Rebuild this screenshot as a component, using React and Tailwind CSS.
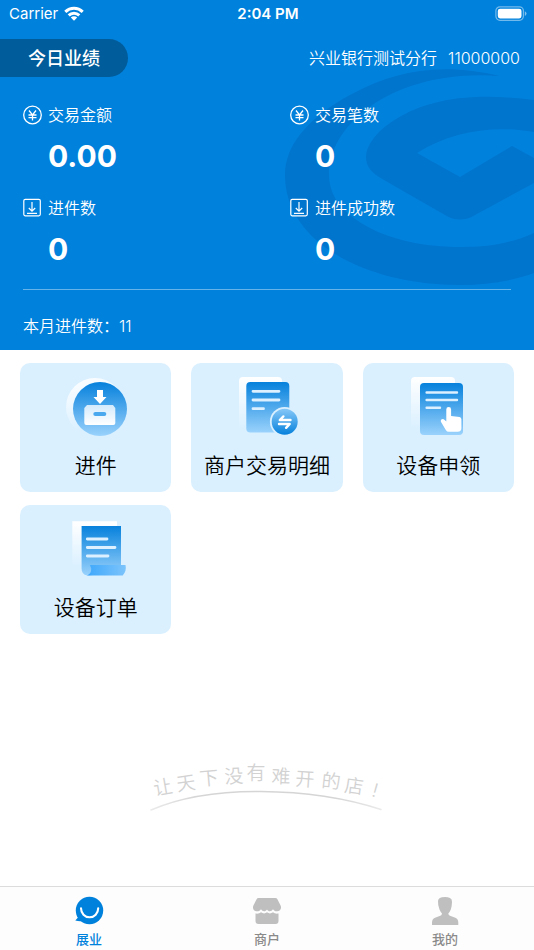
import React from 'react';

const stats = [
    { label: '交易金额', value: '0.00', Icon: YenIcon },
    { label: '交易笔数', value: '0', Icon: YenIcon },
    { label: '进件数', value: '0', Icon: InboxIcon },
    { label: '进件成功数', value: '0', Icon: InboxIcon },
];

const actions = [
    { label: '进件', Icon: IntakeArt },
    { label: '商户交易明细', Icon: DetailArt },
    { label: '设备申领', Icon: ApplyArt },
    { label: '设备订单', Icon: OrderArt },
];

const tabs = [
    { label: '展业', Icon: SmileIcon, active: true },
    { label: '商户', Icon: StoreIcon, active: false },
    { label: '我的', Icon: PersonIcon, active: false },
];

// each slogan character with its centre and tilt along the arc
const slogan = [
    ['让', 26, 38, -10],
    ['天', 49, 34, -8],
    ['下', 72, 29, -5],
    ['没', 97, 27, -3],
    ['有', 119, 24, 0],
    ['难', 144, 27, 2],
    ['开', 168, 30, 4],
    ['的', 194, 32, 6],
    ['店', 217, 37, 8],
    ['!', 238, 41, 16],
];

function YenIcon() {
    return (
        <svg className="w-5 h-5" viewBox="0 0 20 20" fill="none" stroke="white" strokeWidth="1.3" aria-hidden="true">
            <circle cx="9.5" cy="10" r="8.8" />
            <path d="M6 5.5 9.5 10 13 5.500M9.500 10v5.500M5.500 10h8M5.500 12.700h8" />
        </svg>
    );
}

function InboxIcon() {
    return (
        <svg className="w-5 h-5" viewBox="0 0 20 20" fill="none" stroke="white" strokeWidth="1.2" aria-hidden="true">
            <rect x="0.8" y="1.3" width="16.5" height="16.5" rx="1.5" />
            <path d="M9 4v9M5.800 10 9 13.200l3.200-3.200M4 15.300h10" />
        </svg>
    );
}

function IntakeArt() {
    return (
        <svg className="w-[72px] h-[66px]" viewBox="0 0 72 66" aria-hidden="true">
            <defs>
                <linearGradient id="in-back" x1="0" y1="0" x2="0.3" y2="1">
                    <stop offset="0" stopColor="#fff" />
                    <stop offset="0.9" stopColor="#fff" stopOpacity="0" />
                </linearGradient>
                <linearGradient id="in-disc" x1="0" y1="0" x2="0" y2="1">
                    <stop offset="0" stopColor="#0681dc" />
                    <stop offset="1" stopColor="#9ad2fc" />
                </linearGradient>
                <linearGradient id="in-box" x1="0" y1="0" x2="0" y2="1">
                    <stop offset="0" stopColor="#d3eafc" />
                    <stop offset="1" stopColor="#fff" />
                </linearGradient>
            </defs>
            <circle cx="35" cy="32" r="29" fill="url(#in-back)" />
            <circle cx="40" cy="34" r="27" fill="url(#in-disc)" />
            <path d="M37 15h6v7h3.5L40 29l-6.500-7H37z" fill="#fff" />
            <path d="M27 30h26l2.300 3v15a2 2 0 0 1-2 2h-27a2 2 0 0 1-2-2V33z" fill="url(#in-box)" />
            <rect x="33.3" y="37" width="13" height="4" rx="2" fill="#4aa8ee" />
        </svg>
    );
}

function DetailArt() {
    return (
        <svg className="w-[72px] h-[66px]" viewBox="0 0 72 66" aria-hidden="true">
            <defs>
                <linearGradient id="de-back" x1="0" y1="0" x2="0" y2="1">
                    <stop offset="0" stopColor="#fff" />
                    <stop offset="1" stopColor="#fff" stopOpacity="0" />
                </linearGradient>
                <linearGradient id="de-doc" x1="0" y1="0" x2="0" y2="1">
                    <stop offset="0" stopColor="#0681dc" />
                    <stop offset="1" stopColor="#9ad2fc" />
                </linearGradient>
                <linearGradient id="de-dot" x1="0" y1="0" x2="0" y2="1">
                    <stop offset="0" stopColor="#86c8f8" />
                    <stop offset="1" stopColor="#0681dc" />
                </linearGradient>
            </defs>
            <rect x="8" y="2" width="43" height="52" rx="4" fill="url(#de-back)" />
            <rect x="15.3" y="7" width="43" height="50.5" rx="4" fill="url(#de-doc)" />
            <path d="M22 16.300h26M22 25h26M22 33.700h10.500" stroke="#dcf0ff" strokeWidth="2.8" strokeLinecap="round" />
            <circle cx="53.7" cy="46.7" r="14.8" fill="#daf0ff" />
            <circle cx="53.7" cy="46.7" r="13" fill="url(#de-dot)" />
            <path d="M59.500 45H48.800l3.600-3.600M48 49h10.700l-3.600 3.800" fill="none" stroke="#fff" strokeWidth="2.4" strokeLinecap="round" strokeLinejoin="round" />
        </svg>
    );
}

function ApplyArt() {
    return (
        <svg className="w-[72px] h-[66px]" viewBox="0 0 72 66" aria-hidden="true">
            <defs>
                <linearGradient id="ap-back" x1="0" y1="0" x2="0" y2="1">
                    <stop offset="0" stopColor="#fff" />
                    <stop offset="1" stopColor="#fff" stopOpacity="0" />
                </linearGradient>
                <linearGradient id="ap-doc" x1="0" y1="0" x2="0" y2="1">
                    <stop offset="0" stopColor="#0681dc" />
                    <stop offset="1" stopColor="#9ad2fc" />
                </linearGradient>
            </defs>
            <rect x="9" y="2" width="44" height="52" rx="4" fill="url(#ap-back)" />
            <rect x="18" y="8" width="43" height="52" rx="4" fill="url(#ap-doc)" />
            <path d="M24.600 17.500h30.400M24.600 25h30.400M24.600 32.800h13.400" stroke="#dcf0ff" strokeWidth="2.4" strokeLinecap="round" />
            <path d="M44.300 34.500a2.400 2.400 0 0 1 4.800 0v6.500l8.400 1.100q1.900.3 1.900 2.200v8.700q0 3.800-3.600 3.800H46.800q-2 0-3-1.900l-4.900-8.100c-.8-2.400 2-3.800 3.700-1.900l1.700 1.700z" fill="#fff" />
        </svg>
    );
}

function OrderArt() {
    return (
        <svg className="w-[72px] h-[66px]" viewBox="0 0 72 66" aria-hidden="true">
            <defs>
                <linearGradient id="or-back" x1="0" y1="0" x2="0" y2="1">
                    <stop offset="0" stopColor="#fff" />
                    <stop offset="1" stopColor="#fff" stopOpacity="0" />
                </linearGradient>
                <linearGradient id="or-doc" x1="0" y1="0" x2="0" y2="1">
                    <stop offset="0" stopColor="#0681dc" />
                    <stop offset="1" stopColor="#9ad2fc" />
                </linearGradient>
                <linearGradient id="or-roll" x1="0" y1="0" x2="1" y2="0">
                    <stop offset="0" stopColor="#3fa8fb" />
                    <stop offset="1" stopColor="#7cc4fb" />
                </linearGradient>
            </defs>
            <path d="M12.300 4.300H57V50H12.300z" fill="url(#or-back)" />
            <path d="M21.600 9H61v44L30 58.500h-3q-5.400-1-5.400-7z" fill="url(#or-doc)" />
            <path d="M30 48h35.500q1.300 6-2.800 10.500H27q4.600-2 4.200-7z" fill="url(#or-roll)" />
            <path d="M27.300 22H47M27.300 30.500H55M27.300 39H48" stroke="#dcf0ff" strokeWidth="2.8" strokeLinecap="round" />
        </svg>
    );
}

function SmileIcon() {
    return (
        <svg className="w-[30px] h-[30px]" viewBox="0 0 30 30" aria-hidden="true">
            <circle cx="15.5" cy="14.5" r="13.7" fill="currentColor" />
            <path d="M2.500 18 4 21.500 1.300 24.500q4 1.300 8 .5z" fill="currentColor" />
            <path d="M7 12.300a8.600 9 0 0 0 17.200 0" fill="none" stroke="white" strokeWidth="2.1" strokeLinecap="round" />
        </svg>
    );
}

function StoreIcon() {
    return (
        <svg className="w-[30px] h-[30px]" viewBox="0 0 30 30" fill="#bfbfbf" aria-hidden="true">
            <path d="M6.500 2h17q1.300 0 1.900 1.200l3.200 6.300c1.300 2.900-.5 5.800-3.600 5.800-2 0-3.300-.9-4-2.100-.9 1.300-1.800 2-3.100 2S15.700 14.500 15 13.400c-.8 1.100-1.700 1.800-2.900 1.800-1.300 0-2.300-.7-3.100-2-.8 1.200-2 2.100-4 2.100-3.100 0-4.900-2.900-3.600-5.800l3.200-6.300Q5.200 2 6.500 2z" />
            <path d="M3.500 17.500c2.500.4 4.200-.2 5.500-1.200 1.900 1.500 4.200 1.500 6 0 1.800 1.500 4.100 1.500 6 0 1.300 1 3 1.600 5.500 1.200v7.500q0 3-3 3h-17q-3 0-3-3z" />
        </svg>
    );
}

function PersonIcon() {
    return (
        <svg className="w-[30px] h-[30px]" viewBox="0 0 30 30" fill="#bfbfbf" aria-hidden="true">
            <path d="M8 5Q8.500 1.800 12 1.300q4.500-1 8 .7 2.200 1.200 2 4-.1 4.500-1.200 7.500-1 2.500-2.500 4 .2 1.700 1.700 2.200l5.300 2q3 1.200 3 5v1.800q0 .5-.6.5H2.600q-.6 0-.6-.5v-1.800q0-3.800 3-5l5.300-2q1.500-.5 1.700-2.200-1.500-1.500-2.500-4Q7.800 9.500 8 5z" />
        </svg>
    );
}

const StatusBar = () => (
    <div className="h-7 pl-[9px] pr-[7px] grid grid-cols-3 items-center text-[15px] leading-7">
        <div className="flex items-center gap-[6px]">
            <span>Carrier</span>
            <svg className="w-5 h-4" viewBox="0 0 20 16" fill="none" stroke="white" strokeWidth="3" aria-hidden="true">
                <path d="M1.300 5.800a12.500 12.500 0 0 1 17.400 0M4.700 9.400a7.700 7.700 0 0 1 10.600 0" />
                <path d="m10 14.800-3.200-3.300a4.600 4.600 0 0 1 6.400 0z" fill="white" stroke="none" />
            </svg>
        </div>
        <span className="text-center font-semibold">2:04 PM</span>
        <svg className="w-8 h-4 justify-self-end" viewBox="0 0 32 16" aria-hidden="true">
            <rect x="0.9" y="0.8" width="27.5" height="13.5" rx="4" fill="none" stroke="white" strokeOpacity="0.45" strokeWidth="1.2" />
            <rect x="2.8" y="2.7" width="23.7" height="9.7" rx="2.3" fill="white" />
            <path d="M29.800 5.300q1.700.6 1.700 2.300t-1.700 2.300z" fill="white" fillOpacity="0.5" />
        </svg>
    </div>
);

const Emblem = () => (
    <svg className="absolute right-0 top-[68px] w-[249px] h-[218px]" viewBox="285 68 249 218" fill="#0075cd" aria-hidden="true">
        <path d="M500 76C442 62 395 70 350 95C308 118 285 145 285 175C285 243 367 285 460 285C487 285 512 281 534 273V233C512 243 490 247 462 247C417 247 380 237 355 219C338 207 329 192 329 175C329 120 400 68 500 76Z" />
        <path d="M534 100C470 92 425 99 390 123C374 134 366 147 366 157C366 166 371 173 384 180L445 215Q460 224 475 215L534 183V158L512 146L460 177L417 153C452 131 493 125 534 132Z" />
    </svg>
);

const App = () => {
    return (
        <div className="min-h-screen flex flex-col bg-white font-[Inter,'Noto_Sans_CJK_SC',sans-serif]" lang="zh-CN">
            {/* Header */}
            <header className="relative bg-[#0081dc] text-white">
                <Emblem />
                <div className="relative">
                    <StatusBar />

                    <div className="mt-[11px] flex items-center justify-between pr-[14px]">
                        <h1 className="h-[38px] px-7 rounded-r-full bg-[#005c9b] text-[18px] leading-10 font-medium">今日业绩</h1>
                        <p className="flex gap-[11px] text-[16px] leading-6 font-[350]">
                            <span>兴业银行测试分行</span>
                            <span>11000000</span>
                        </p>
                    </div>

                    <dl className="mt-[26px] grid grid-cols-2 gap-y-[18px]">
                        {stats.map(({ label, value, Icon }) => (
                            <div key={label} className="pl-[23px]">
                                <dt className="flex items-center gap-[5px] text-[16px] leading-6 font-[350]">
                                    <Icon />
                                    {label}
                                </dt>
                                <dd className="pl-[25px] mt-[7px] text-[30px] leading-[44px] font-bold">{value}</dd>
                            </div>
                        ))}
                    </dl>

                    <div className="mx-[23px] mt-[18px] pt-6 pb-3 border-t border-white/40">
                        <p className="text-[16px] leading-6 font-[350]">本月进件数：11</p>
                    </div>
                </div>
            </header>

            {/* Actions */}
            <main className="flex-1 flex flex-col">
                <div className="grid grid-cols-3 gap-x-5 gap-y-[13px] px-5 pt-[13px]">
                    {actions.map(({ label, Icon }) => (
                        <button key={label} type="button" className="flex flex-col items-center py-3 rounded-[10px] bg-[#daf0ff] text-black">
                            <Icon />
                            <span className="mt-[11px] text-[21px] leading-7 font-[350]">{label}</span>
                        </button>
                    ))}
                </div>

                <svg className="mt-auto mb-[66px] mx-auto w-[260px] h-[70px]" viewBox="0 0 260 70" role="img" aria-label="让天下没有难开的店！">
                    <defs>
                        <linearGradient id="arc-fade" x1="0" y1="0" x2="1" y2="0">
                            <stop offset="0" stopColor="#d5d5d5" stopOpacity="0.5" />
                            <stop offset="0.2" stopColor="#d5d5d5" />
                            <stop offset="0.8" stopColor="#d5d5d5" />
                            <stop offset="1" stopColor="#d5d5d5" stopOpacity="0.5" />
                        </linearGradient>
                    </defs>
                    <g fill="#d2d2d2" fontSize="19" fontWeight="350" textAnchor="middle">
                        {slogan.map(([char, x, y, tilt]) => (
                            <text key={char} x={x} y={y + 6} transform={`rotate(${tilt} ${x} ${y})`}>{char}</text>
                        ))}
                    </g>
                    <path d="M14 60Q58 41 124 41.500Q190 42 244 59.500" fill="none" stroke="url(#arc-fade)" strokeWidth="1.4" strokeLinecap="round" />
                </svg>
            </main>

            {/* Tab bar */}
            <nav className="grid grid-cols-3 border-t border-[#dcdcdc] bg-[#fdfdfd]">
                {tabs.map(({ label, Icon, active }) => (
                    <button
                        key={label}
                        type="button"
                        className={`flex flex-col items-center pt-[9px] pb-[2px] ${active ? 'text-[#0081dc]' : 'text-[#8a8a8a]'}`}
                    >
                        <Icon />
                        <span className="mt-1 text-[13px] leading-[18px] font-medium">{label}</span>
                    </button>
                ))}
            </nav>
        </div>
    );
};

export default App;
